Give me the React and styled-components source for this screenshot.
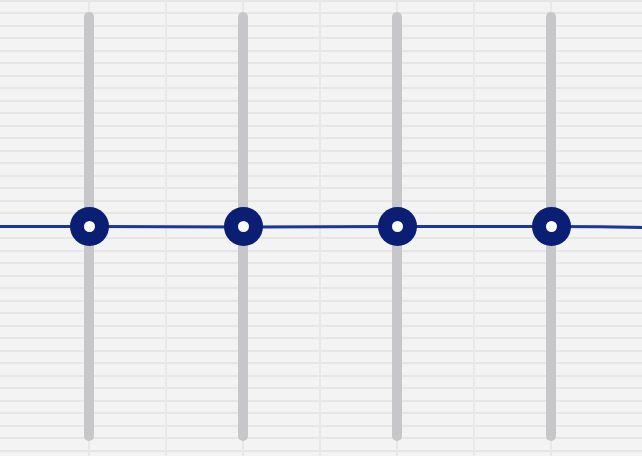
import React from "react";
import styled, { createGlobalStyle } from "styled-components";

const Global = createGlobalStyle`
  html, body {
    margin: 0;
    padding: 0;
    background: #f3f3f3;
    overflow: hidden;
  }
`;

const Chart = styled.div`
  position: relative;
  width: 642px;
  height: 456px;
  box-sizing: border-box;
  padding: 0 14px 0 12px;
  display: flex;
  background-color: #f3f3f3;
  background-image:
    repeating-linear-gradient(
      to bottom,
      #e6e6e6 0px,
      #e6e6e6 1.5px,
      transparent 1.5px,
      transparent 12.5px
    );
  background-position: 0 0;
`;

const Column = styled.div`
  position: relative;
  width: 154px;
  flex: none;
  display: flex;
  justify-content: center;
  padding: 12px 0 15px;
  box-sizing: border-box;
  &::before,
  &::after {
    content: "";
    position: absolute;
    top: 0;
    bottom: 0;
    width: 2px;
    background: #e8e8e8;
  }
  &::before {
    left: 76px;
  }
  &::after {
    right: -1px;
  }
  &:last-of-type::after {
    display: none;
  }
`;

const Track = styled.div`
  position: relative;
  width: 10px;
  height: 100%;
  border-radius: 5px;
  background: #c7c7c9;
`;

const Knob = styled.div`
  position: absolute;
  z-index: 3;
  left: 50%;
  top: ${p => p.$top}px;
  width: 39px;
  height: 39px;
  margin: -19.5px 0 0 -19.5px;
  border-radius: 50%;
  background: #0a1e73;
  display: flex;
  align-items: center;
  justify-content: center;
  &::after {
    content: "";
    width: 11px;
    height: 11px;
    border-radius: 50%;
    background: #ffffff;
  }
`;

const Curve = styled.svg`
  position: absolute;
  z-index: 2;
  left: 0;
  top: 0;
  pointer-events: none;
`;

const values = [214.5, 214.5, 214.5, 214.5];

export default function App() {
  return (
    <>
      <Global />
      <Chart>
        {values.map((v, i) => (
          <Column key={i}>
            <Track>
              <Knob $top={v} />
            </Track>
          </Column>
        ))}
        <Curve width="642" height="456">
          <polyline
            points="0,226.5 89,226.5 243,227 397,226.5 551,226.5 600,226.7 642,227.5"
            fill="none"
            stroke="#1b3899"
            strokeWidth="3"
          />
        </Curve>
      </Chart>
    </>
  );
}
